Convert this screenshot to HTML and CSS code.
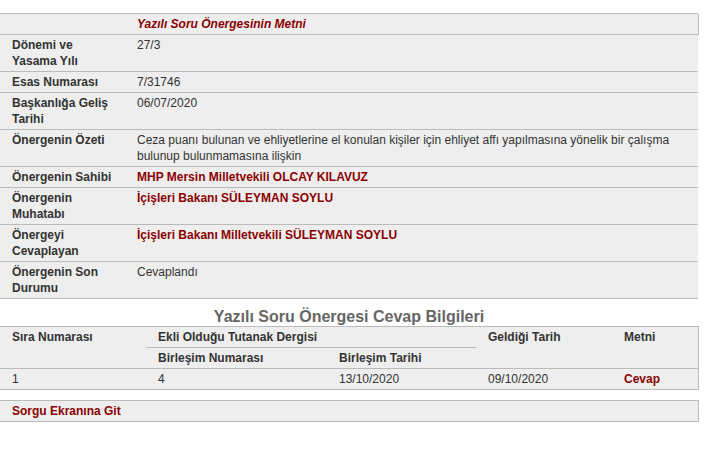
FILE: index.html
```html
<!DOCTYPE html>
<html lang="tr">
<head>
<meta charset="utf-8">
<title>Yazılı Soru Önergesi</title>
<link rel="stylesheet" href="styles.css">
</head>
<body>
<table class="info">
  <colgroup><col class="c-label"><col class="c-value"></colgroup>
  <tr class="head">
    <td></td>
    <td class="head-title">Yazılı Soru Önergesinin Metni</td>
  </tr>
  <tr><th>Dönemi ve Yasama Yılı</th><td>27/3</td></tr>
  <tr><th>Esas Numarası</th><td>7/31746</td></tr>
  <tr><th>Başkanlığa Geliş Tarihi</th><td>06/07/2020</td></tr>
  <tr><th>Önergenin Özeti</th><td>Ceza puanı bulunan ve ehliyetlerine el konulan kişiler için ehliyet affı yapılmasına yönelik bir çalışma bulunup bulunmamasına ilişkin</td></tr>
  <tr><th>Önergenin Sahibi</th><td class="red">MHP Mersin Milletvekili OLCAY KILAVUZ</td></tr>
  <tr><th>Önergenin Muhatabı</th><td class="red">İçişleri Bakanı SÜLEYMAN SOYLU</td></tr>
  <tr><th>Önergeyi Cevaplayan</th><td class="red">İçişleri Bakanı Milletvekili SÜLEYMAN SOYLU</td></tr>
  <tr><th>Önergenin Son Durumu</th><td>Cevaplandı</td></tr>
</table>

<div class="section-title">Yazılı Soru Önergesi Cevap Bilgileri</div>

<table class="answers">
  <colgroup>
    <col class="a1"><col class="a2"><col class="a3"><col class="a4"><col class="a5">
  </colgroup>
  <tr>
    <th rowspan="2" class="bb">Sıra Numarası</th>
    <th colspan="2" class="bb">Ekli Olduğu Tutanak Dergisi</th>
    <th rowspan="2" class="bb">Geldiği Tarih</th>
    <th rowspan="2" class="bb last">Metni</th>
  </tr>
  <tr>
    <th class="bb">Birleşim Numarası</th>
    <th class="bb">Birleşim Tarihi</th>
  </tr>
  <tr>
    <td class="bb">1</td>
    <td class="bb">4</td>
    <td class="bb">13/10/2020</td>
    <td class="bb">09/10/2020</td>
    <td class="bb last red">Cevap</td>
  </tr>
</table>

<div class="back">Sorgu Ekranına Git</div>
</body>
</html>
```

FILE: styles.css
```css
html, body {
  margin: 0;
  padding: 0;
  background: #fff;
}
body {
  padding-top: 13px;
  font-family: "Liberation Sans", Arial, sans-serif;
  font-size: 12px;
  line-height: 16px;
  color: #333;
}
table {
  border-collapse: separate;
  border-spacing: 0;
  table-layout: fixed;
}
.info {
  width: 698px;
  background: #eee;
  border-top: 1px solid #bbb;
}
.c-label { width: 125px; }
.c-value { width: 573px; }
.info th, .info td {
  padding: 2px 12px;
  text-align: left;
  vertical-align: top;
  border-bottom: 1px solid #bbb;
}
.info th {
  font-weight: bold;
  color: #333;
}
.info .head td:last-child {
  box-shadow: 1px 0 0 #bbb;
}
.head-title {
  color: #8b0000;
  font-weight: bold;
  font-style: italic;
}
.red {
  color: #8b0000;
  font-weight: bold;
}
.section-title {
  width: 698px;
  margin-top: 9px;
  text-align: center;
  font-size: 16px;
  line-height: 18px;
  font-weight: bold;
  color: #666;
}
.answers {
  width: 699px;
  background: #eee;
  border-top: 1px solid #bbb;
}
.a1 { width: 146px; }
.a2 { width: 181px; }
.a3 { width: 149px; }
.a4 { width: 136px; }
.a5 { width: 87px; }
.answers th, .answers td {
  padding: 2px 12px;
  text-align: left;
  vertical-align: top;
}
.answers th {
  font-weight: bold;
  color: #333;
}
.answers .bb { border-bottom: 1px solid #bbb; }
.answers .last { border-right: 1px solid #bbb; }
.back {
  box-sizing: border-box;
  width: 699px;
  margin-top: 10px;
  padding: 2px 12px;
  background: #eee;
  border-top: 1px solid #bbb;
  border-bottom: 1px solid #bbb;
  border-right: 1px solid #bbb;
  color: #8b0000;
  font-weight: bold;
}
```
